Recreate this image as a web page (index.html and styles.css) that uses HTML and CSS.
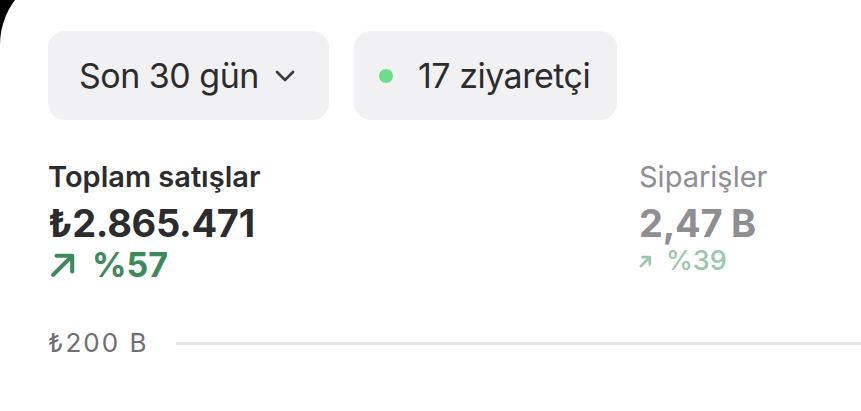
FILE: index.html
```html
<!DOCTYPE html>
<html lang="tr">
<head>
<meta charset="utf-8">
<link rel="stylesheet" href="styles.css">
</head>
<body>
<div class="card">
  <div class="filters">
    <button class="pill pill-range">
      <span>Son 30 gün</span>
      <svg class="chev" width="20" height="12" viewBox="0 0 20 12"><path d="M2 2 L10 10 L18 2" fill="none" stroke="#3a3a3c" stroke-width="2.6" stroke-linecap="round" stroke-linejoin="round"/></svg>
    </button>
    <button class="pill pill-visitors">
      <span class="dot"></span>
      <span>17 ziyaretçi</span>
    </button>
  </div>
  <div class="stats">
    <div class="stat stat-main">
      <div class="stat-title">Toplam satışlar</div>
      <div class="stat-value">₺2.865.471</div>
      <div class="stat-change">
        <svg class="arrow arrow-main" width="26" height="26" viewBox="0 0 24 24"><path d="M3 21 L19.5 4.5 M6 3.5 H20.5 V18" fill="none" stroke="currentColor" stroke-width="3.8" stroke-linecap="round" stroke-linejoin="round"/></svg>
        <span>%57</span>
      </div>
    </div>
    <div class="stat stat-side">
      <div class="stat-title">Siparişler</div>
      <div class="stat-value">2,47 B</div>
      <div class="stat-change">
        <svg class="arrow" width="13" height="13" viewBox="0 0 24 24"><path d="M3.5 20.5 L19.5 4.5 M6.5 4 H20 V17.5" fill="none" stroke="currentColor" stroke-width="5" stroke-linecap="round" stroke-linejoin="round"/></svg>
        <span>%39</span>
      </div>
    </div>
  </div>
  <div class="axis">
    <span class="axis-label">₺200 B</span>
    <span class="axis-line"></span>
  </div>
</div>
</body>
</html>
```

FILE: styles.css
```css
html, body {
  margin: 0;
  padding: 0;
  background: #000;
  height: 100%;
  overflow: hidden;
}
body {
  font-family: Inter, "Noto Sans", sans-serif;
}
.card {
  background: #fff;
  margin-top: -30px;
  border-top-left-radius: 75px;
  height: 441px;
  padding: 61px 0 0 48px;
  box-sizing: border-box;
}
.filters {
  display: flex;
  gap: 25px;
}
.pill {
  display: flex;
  align-items: center;
  height: 89px;
  border: 0;
  border-radius: 17px;
  background: #f1f1f3;
  font-family: inherit;
  font-size: 34px;
  color: #2c2c2e;
  letter-spacing: -0.5px;
}
.pill-range {
  width: 281px;
  padding: 0 0 0 31px;
  gap: 16px;
}
.chev {
  display: block;
}
.pill-visitors {
  width: 263px;
  padding: 0 0 0 25px;
  gap: 25px;
}
.dot {
  width: 14px;
  height: 14px;
  border-radius: 50%;
  background: #6ddc8b;
}
.stats {
  display: flex;
  margin-top: 40px;
}
.stat-main {
  width: 591px;
}
.stat-title {
  font-size: 29px;
  font-weight: 600;
  color: #2c2c2e;
  line-height: 34px;
}
.stat-value {
  margin-top: 7px;
  font-size: 38px;
  font-weight: 700;
  color: #2c2c2e;
  line-height: 44px;
  letter-spacing: -0.3px;
}
.stat-change {
  display: flex;
  align-items: center;
  gap: 16px;
  font-size: 34px;
  font-weight: 700;
  color: #3f8a5c;
  line-height: 40px;
}
.arrow-main {
  margin-left: 2px;
}
.stat-side .stat-title {
  font-weight: 400;
  color: #8e8e93;
}
.stat-side .stat-value {
  color: #8e8e93;
}
.stat-side .stat-change {
  font-size: 27px;
  font-weight: 500;
  color: #9bc7aa;
  gap: 14px;
  line-height: 32px;
}
.axis {
  display: flex;
  align-items: center;
  gap: 28px;
  margin-top: 42px;
}
.axis-label {
  font-size: 26px;
  line-height: 32px;
  color: #6e6e73;
  letter-spacing: 2px;
}
.axis-line {
  flex: 1;
  height: 3px;
  background: #e6e6e8;
}
```
